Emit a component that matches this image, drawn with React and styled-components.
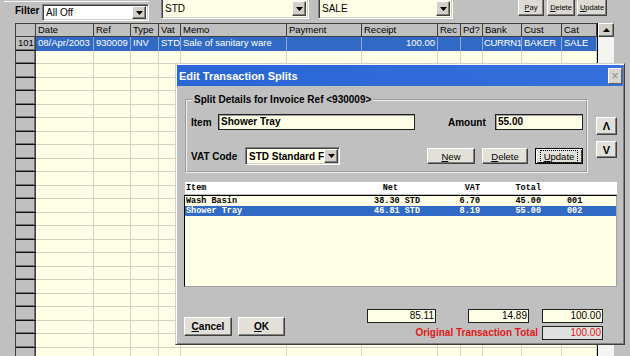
import React from 'react';
import styled, { createGlobalStyle } from 'styled-components';

const GlobalStyle = createGlobalStyle`
  html, body { margin: 0; padding: 0; background: #c0c0c0; }
  body { font-family: "Liberation Sans", Arial, sans-serif; }
  * { box-sizing: border-box; }
`;

const Page = styled.div`
  position: relative;
  width: 630px;
  height: 356px;
  overflow: hidden;
  background: #c0c0c0;
  display: flex;
  flex-direction: column;
  font-family: "Liberation Sans", Arial, sans-serif;
  color: #000;
`;

/* ---------- top bar ---------- */
const TopBar = styled.div`
  height: 23px;
  flex: none;
  display: flex;
  align-items: flex-start;
`;

const FilterGroup = styled.div`
  margin: 1px 0 0 4px;
  width: 145px;
  height: 21px;
  flex: none;
  display: flex;
  align-items: flex-start;
  border-top: 1px solid #f4f4f4;
  padding-left: 11px;
`;

const FilterLabel = styled.span`
  margin-top: 4px;
  width: 27px;
  font-size: 10px;
  font-weight: bold;
  line-height: 10px;
`;

const Combo = styled.div`
  width: ${p => p.$w}px;
  height: ${p => p.$h}px;
  margin-top: ${p => p.$top || 0}px;
  margin-left: ${p => p.$ml || 0}px;
  background: ${p => p.$bg || '#fff'};
  border: 1px solid;
  border-color: #808080 #fff #fff #808080;
  box-shadow: inset 1px 1px #404040, inset -1px -1px #d4d0c8;
  display: flex;
  align-items: center;
  justify-content: space-between;
  padding: 0 2px 0 3px;
  font-size: ${p => p.$fs || 10}px;
  font-weight: ${p => (p.$bold ? 'bold' : 'normal')};
  white-space: nowrap;
  overflow: hidden;
  flex: none;
`;

const DropBtn = styled.span`
  width: 14px;
  height: ${p => p.$h || 13}px;
  flex: none;
  background: #d4d0c8;
  border: 1px solid;
  border-color: #fff #404040 #404040 #fff;
  box-shadow: inset -1px -1px #808080;
  display: flex;
  align-items: center;
  justify-content: center;
`;

const Arrow = ({ down = true }) => (
  <svg width="7" height="4" viewBox="0 0 7 4">
    {down ? <polygon points="0,0 7,0 3.5,4" fill="#000" /> : <polygon points="0,4 7,4 3.5,0" fill="#000" />}
  </svg>
);

const TinyButton = styled.span`
  width: ${p => p.$w}px;
  height: 17px;
  margin-top: -1px;
  margin-left: ${p => p.$ml || 0}px;
  flex: none;
  background: #dcdad2;
  border: 1px solid;
  border-color: #fff #404040 #404040 #fff;
  box-shadow: inset -1px -1px #808080;
  font-size: 7.5px;
  display: flex;
  align-items: center;
  justify-content: center;
  u { text-decoration: underline; }
`;

/* ---------- grid ---------- */
const COLS = [21, 58, 37, 28, 22, 106, 75, 76, 23, 22, 39, 40, 35];
const HEAD = ['', 'Date', 'Ref', 'Type', 'Vat', 'Memo', 'Payment', 'Receipt', 'Rec', 'Pd?', 'Bank', 'Cust', 'Cat'];
const ROW101 = ['101', '08/Apr/2003', '930009', 'INV', 'STD', 'Sale of sanitary ware', '', '100.00', '', '', 'CURRN1', 'BAKER', 'SALE'];
const RIGHT = { 7: true };
const TIGHT = { 10: true };

const GridArea = styled.div`
  flex: 1;
  min-height: 0;
  display: flex;
  padding-left: 15px;
`;

const Table = styled.div`
  width: 582px;
  display: grid;
  grid-template-columns: ${COLS.map(c => c + 'px').join(' ')};
  grid-template-rows: 14px;
  grid-auto-rows: 13.5px;
  overflow: hidden;
  background: #fffee6;
  font-size: 9.5px;
`;

const HeadCell = styled.div`
  background: #c0c0c0;
  border-top: 1px solid #404040;
  border-right: 1px solid #404040;
  border-bottom: 1px solid #404040;
  border-left: ${p => (p.$first ? '1px solid #404040' : 'none')};
  padding: 0 2px;
  line-height: 12px;
  white-space: nowrap;
  overflow: hidden;
`;

const RowHead = styled.div`
  background: #c0c0c0;
  border-left: 1px solid #404040;
  border-right: 1px solid #404040;
  border-bottom: 1px solid #111;
  box-shadow: inset -1px -1px #707070;
  padding: 0 2px;
  line-height: 12px;
  white-space: nowrap;
`;

const Cell = styled.div`
  background: ${p => (p.$sel ? '#316ac5' : '#fffee6')};
  color: ${p => (p.$sel ? '#fff' : '#000')};
  border-right: 1px solid ${p => (p.$sel ? '#93a9d6' : '#d6d6cc')};
  border-bottom: 1px solid ${p => (p.$sel ? '#316ac5' : '#d2d2c6')};
  padding: 0 ${p => (p.$tight ? 1 : 2)}px;
  letter-spacing: ${p => (p.$tight ? '-0.3px' : 'normal')};
  line-height: 12px;
  text-align: ${p => (p.$right ? 'right' : 'left')};
  white-space: nowrap;
  overflow: hidden;
`;

const ScrollBar = styled.div`
  width: 17px;
  border-left: 1px solid #000;
  background: #f4f4f0;
  display: flex;
  flex-direction: column;
`;

const ScrollBtn = styled.div`
  height: 14px;
  background: #d4d0c8;
  border: 1px solid;
  border-color: #fff #404040 #404040 #fff;
  box-shadow: inset -1px -1px #808080;
  display: flex;
  align-items: center;
  justify-content: center;
`;

/* ---------- dialog ---------- */
const Dialog = styled.div`
  position: absolute;
  left: 175px;
  top: 63px;
  width: 450px;
  height: 282px;
  background: #c0c0c0;
  border: 1px solid;
  border-color: #d4d0c8 #404040 #404040 #d4d0c8;
  box-shadow: inset 1px 1px #fff, inset -1px -1px #808080;
  padding: 1px;
  display: flex;
  flex-direction: column;
`;

const TitleBar = styled.div`
  height: 21px;
  flex: none;
  background: linear-gradient(90deg, #2a65d5, #3470dc);
  color: #fff;
  font-weight: bold;
  font-size: 11px;
  display: flex;
  align-items: center;
  justify-content: space-between;
  padding: 0 1px 0 2px;
`;

const CloseBtn = styled.span`
  width: 14px;
  height: 16px;
  background: #d8d6ce;
  border: 1px solid;
  border-color: #fff #606060 #606060 #fff;
  color: #8c8c8c;
  font-size: 12px;
  font-weight: normal;
  display: flex;
  align-items: center;
  justify-content: center;
  line-height: 1;
`;

const Body = styled.div`
  flex: 1;
  display: flex;
  flex-direction: column;
  padding: 8px 6px 0 8px;
`;

const TopSection = styled.div`
  display: flex;
  align-items: flex-start;
`;

const Group = styled.fieldset`
  width: 403px;
  margin: 0;
  padding: 0 3px 6px 4px;
  border: 2px groove #eeeeee;
  min-width: 0;
`;

const Legend = styled.legend`
  padding: 0 2px;
  margin-left: 1px;
  font-size: 10px;
  font-weight: bold;
  line-height: 12px;
`;

const FormRow = styled.div`
  display: flex;
  align-items: center;
  height: ${p => p.$h}px;
  margin-top: ${p => p.$mt}px;
`;

const FieldLabel = styled.span`
  width: ${p => p.$w}px;
  flex: none;
  font-size: 10px;
  font-weight: bold;
`;

const TextInput = styled.div`
  width: ${p => p.$w}px;
  height: 16px;
  flex: none;
  background: #fffee6;
  border: 1px solid #202020;
  box-shadow: inset 1px 1px #a0a0a0;
  font-size: 10px;
  font-weight: bold;
  line-height: 14px;
  padding-left: 2px;
`;

const Spacer = styled.span`
  flex: 1;
`;

const Button = styled.span`
  width: ${p => p.$w}px;
  height: ${p => p.$h || 16}px;
  margin-left: ${p => p.$ml || 0}px;
  flex: none;
  background: #e2e0d8;
  border: 1px solid;
  border-color: ${p => (p.$default ? '#000' : '#fff #404040 #404040 #fff')};
  box-shadow: ${p => (p.$default ? 'inset 1px 1px #fff, inset -1px -1px #404040' : 'inset -1px -1px #808080')};
  font-size: ${p => p.$fs || 9.5}px;
  font-weight: ${p => (p.$bold ? 'bold' : 'normal')};
  display: flex;
  align-items: center;
  justify-content: center;
  u { text-decoration: underline; }
`;

const FocusText = styled.span`
  outline: 1px dotted #000;
  outline-offset: 1px;
  padding: 0 2px;
  line-height: 9px;
`;

const SideCol = styled.div`
  width: 21px;
  margin-left: 8px;
  padding-top: 23px;
  display: flex;
  flex-direction: column;
  gap: 6px;
`;

const ListGrid = styled.div`
  display: grid;
  grid-template-columns: 150px 84px 60px 61px 26px 1fr;
  padding-left: 1px;
  font-family: "Liberation Mono", "Courier New", monospace;
  font-size: 8.5px;
  font-weight: bold;
  white-space: pre;
`;

const ListHeader = styled(ListGrid)`
  margin-top: 9px;
  height: 12px;
  line-height: 12px;
  background: #fff;
`;

const ListBox = styled.div`
  margin-top: 1px;
  margin-left: -1px;
  height: 92px;
  background: #fffee6;
  border: 1px solid;
  border-color: #000 #a0a0a0 #a0a0a0 #000;
`;

const ListRow = styled(ListGrid)`
  height: 10px;
  line-height: 10px;
  background: ${p => (p.$sel ? '#316ac5' : 'transparent')};
  color: ${p => (p.$sel ? '#fff' : '#000')};
`;

const LCell = styled.span`
  text-align: ${p => (p.$right ? 'right' : 'left')};
  padding-right: ${p => p.$pr || 0}px;
  overflow: hidden;
`;

const BottomArea = styled.div`
  display: flex;
  align-items: flex-start;
  padding-top: 22px;
`;

const BtnGroup = styled.div`
  display: flex;
  gap: 6px;
  margin-top: 8px;
  margin-left: -1px;
`;

const Totals = styled.div`
  margin-left: auto;
  margin-right: 14px;
  display: grid;
  grid-template-columns: 69px 32px 61px 13px 61px;
  grid-template-rows: 14px 14px;
  row-gap: 3px;
`;

const TotalBox = styled.div`
  grid-column: ${p => p.$col};
  background: ${p => (p.$grey ? '#e0e0e0' : '#fffee6')};
  color: ${p => (p.$grey ? '#e01818' : '#000')};
  border: 1px solid #202020;
  font-size: 10px;
  line-height: 12px;
  text-align: right;
  padding-right: 1px;
`;

const RedLabel = styled.div`
  grid-column: 1 / 5;
  justify-self: end;
  padding-right: 4px;
  color: #e01818;
  font-size: 10px;
  font-weight: bold;
  line-height: 14px;
`;

const ITEMS = [
  { item: 'Wash Basin', net: '38.30 STD', vat: '6.70', total: '45.00', code: '001' },
  { item: 'Shower Tray', net: '46.81 STD', vat: '8.19', total: '55.00', code: '002', sel: true },
];

export default function App() {
  const emptyRows = Array.from({ length: 24 });
  return (
    <Page>
      <GlobalStyle />
      <TopBar>
        <FilterGroup>
          <FilterLabel>Filter</FilterLabel>
          <Combo $w={107} $h={17} $top={2}>
            <span>All Off</span>
            <DropBtn><Arrow /></DropBtn>
          </Combo>
        </FilterGroup>
        <Combo $w={148} $h={21} $top={-2} $ml={12} $bg="#fffee6">
          <span>STD</span>
          <DropBtn $h={15}><Arrow /></DropBtn>
        </Combo>
        <Combo $w={135} $h={21} $top={-2} $ml={9} $bg="#fffee6">
          <span>SALE</span>
          <DropBtn $h={15}><Arrow /></DropBtn>
        </Combo>
        <TinyButton $w={26} $ml={65}><span><u>P</u>ay</span></TinyButton>
        <TinyButton $w={28} $ml={3}><span><u>D</u>elete</span></TinyButton>
        <TinyButton $w={30} $ml={2}><span><u>U</u>pdate</span></TinyButton>
      </TopBar>

      <GridArea>
        <Table>
          {HEAD.map((h, i) => (
            <HeadCell key={'h' + i} $first={i === 0}>{h}</HeadCell>
          ))}
          {ROW101.map((v, i) =>
            i === 0 ? (
              <RowHead key="r0">{v}</RowHead>
            ) : (
              <Cell key={'r' + i} $sel $right={RIGHT[i]} $tight={TIGHT[i]}>{v}</Cell>
            )
          )}
          {emptyRows.map((_, r) =>
            COLS.map((c, i) =>
              i === 0 ? <RowHead key={`e${r}-${i}`} /> : <Cell key={`e${r}-${i}`} />
            )
          )}
        </Table>
        <ScrollBar>
          <ScrollBtn><Arrow down={false} /></ScrollBtn>
        </ScrollBar>
      </GridArea>

      <Dialog>
        <TitleBar>
          <span>Edit Transaction Splits</span>
          <CloseBtn>×</CloseBtn>
        </TitleBar>
        <Body>
          <TopSection>
            <Group>
              <Legend>Split Details for Invoice Ref &lt;930009&gt;</Legend>
              <FormRow $h={16} $mt={8}>
                <FieldLabel $w={27}>Item</FieldLabel>
                <TextInput $w={197}>Shower Tray</TextInput>
                <Spacer />
                <FieldLabel $w={47}>Amount</FieldLabel>
                <TextInput $w={88}>55.00</TextInput>
              </FormRow>
              <FormRow $h={18} $mt={17}>
                <FieldLabel $w={54}>VAT Code</FieldLabel>
                <Combo $w={95} $h={18} $bg="#fffee6" $bold>
                  <span>STD Standard F</span>
                  <DropBtn $h={14}><Arrow /></DropBtn>
                </Combo>
                <Spacer />
                <Button $w={48}><span><u>N</u>ew</span></Button>
                <Button $w={46} $ml={7}><span><u>D</u>elete</span></Button>
                <Button $w={48} $ml={7} $default><FocusText><u>U</u>pdate</FocusText></Button>
              </FormRow>
            </Group>
            <SideCol>
              <Button $w={21} $h={18} $bold $fs={11}>Λ</Button>
              <Button $w={21} $h={17} $bold $fs={11}>V</Button>
            </SideCol>
          </TopSection>

          <ListHeader>
            <LCell>Item</LCell>
            <LCell $right $pr={22}>Net</LCell>
            <LCell $right>VAT</LCell>
            <LCell $right>Total</LCell>
            <LCell />
            <LCell />
          </ListHeader>
          <ListBox>
            {ITEMS.map(it => (
              <ListRow key={it.code} $sel={it.sel}>
                <LCell>{it.item}</LCell>
                <LCell $right>{it.net}</LCell>
                <LCell $right>{it.vat}</LCell>
                <LCell $right>{it.total}</LCell>
                <LCell />
                <LCell>{it.code}</LCell>
              </ListRow>
            ))}
          </ListBox>

          <BottomArea>
            <BtnGroup>
              <Button $w={48} $h={19} $bold $fs={10}><span><u>C</u>ancel</span></Button>
              <Button $w={47} $h={19} $bold $fs={10}><span><u>O</u>K</span></Button>
            </BtnGroup>
            <Totals>
              <TotalBox $col={1}>85.11</TotalBox>
              <TotalBox $col={3}>14.89</TotalBox>
              <TotalBox $col={5}>100.00</TotalBox>
              <RedLabel>Original Transaction Total</RedLabel>
              <TotalBox $col={5} $grey>100.00</TotalBox>
            </Totals>
          </BottomArea>
        </Body>
      </Dialog>
    </Page>
  );
}
